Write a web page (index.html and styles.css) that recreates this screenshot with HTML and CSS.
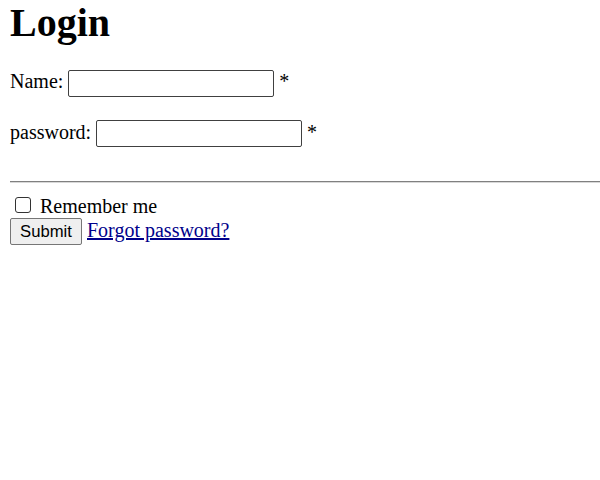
FILE: index.html
```html
<!DOCTYPE html>
<html>
<head>
<meta charset="utf-8">
<title>Login</title>
<link rel="stylesheet" href="styles.css">
</head>
<body>
<h1 class="title">Login</h1>
<form class="login-form">
  <p class="row"><label for="name">Name:</label> <input class="field" id="name" type="text"> *</p>
  <p class="row"><label for="pw">password:</label> <input class="field" id="pw" type="password"> *</p>
  <hr class="divider">
  <div class="remember"><input class="check" type="checkbox" id="rem"> <label for="rem">Remember me</label></div>
  <div class="actions"><button class="submit" type="submit">Submit</button> <a class="forgot" href="#">Forgot password?</a></div>
</form>
</body>
</html>
```
FILE: styles.css
```css
html, body { background: #fff; }
body {
  margin: 0 0 0 10px;
  font-family: "Liberation Serif", "Times New Roman", serif;
  font-size: 20px;
  color: #000;
}
.title {
  font-size: 40px;
  margin: 0 0 0;
  line-height: 46px;
}
.row {
  margin: 20px 0;
  line-height: 30px;
}
.field {
  width: 206px;
  height: 27px;
  box-sizing: border-box;
  border: 1px solid #404040;
  border-radius: 2px;
  font: 16.67px "Liberation Sans", Arial, sans-serif;
  padding: 1px 2px;
  vertical-align: baseline;
}
.divider {
  margin: 34px 0 12px 0;
  border: 0;
  border-top: 1px solid #808080;
  border-bottom: 1px solid #d8d8d8;
  height: 0;
}
.remember { line-height: 23px; }
.check {
  appearance: none;
  -webkit-appearance: none;
  width: 16px;
  height: 16px;
  box-sizing: border-box;
  border: 1px solid #333;
  border-radius: 3px;
  background: #fff;
  margin: 0 4px 0 5px;
  vertical-align: 0;
}
.actions { line-height: 23px; }
.submit {
  font: 16.67px "Liberation Sans", Arial, sans-serif;
  height: 27px;
  width: 72px;
  padding: 1px 6px;
  background: #efefef;
  border: 1px solid #767676;
  border-radius: 2px;
  color: #000;
  box-sizing: border-box;
}
.forgot { color: #00008b; text-decoration: underline; }
```
